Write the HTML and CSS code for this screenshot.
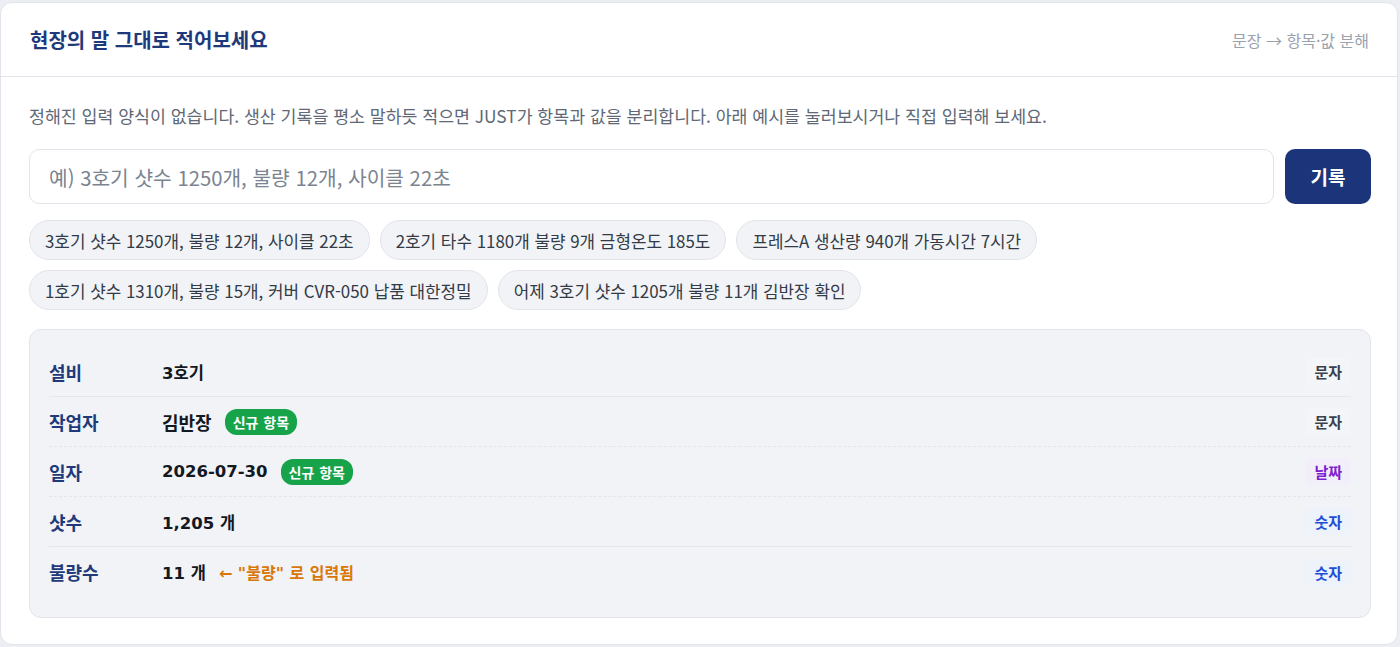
FILE: index.html
```html
<!DOCTYPE html>
<html lang="ko">
<head>
    <meta charset="UTF-8">
    <meta name="viewport" content="width=device-width, initial-scale=1.0">
    <title>현장의 말 그대로 적어보세요</title>
    <link rel="stylesheet" href="styles.css">
</head>
<body>
    <div class="card">
        <div class="card-header">
            <h2 class="title">현장의 말 그대로 적어보세요</h2>
            <span class="hint">문장 → 항목·값 분해</span>
        </div>

        <div class="card-body">
            <p class="desc">정해진 입력 양식이 없습니다. 생산 기록을 평소 말하듯 적으면 JUST가 항목과 값을 분리합니다. 아래 예시를 눌러보시거나 직접 입력해 보세요.</p>

            <div class="input-row">
                <input type="text" class="entry" placeholder="예) 3호기 샷수 1250개, 불량 12개, 사이클 22초">
                <button class="submit">기록</button>
            </div>

            <div class="chips">
                <button class="chip">3호기 샷수 1250개, 불량 12개, 사이클 22초</button>
                <button class="chip">2호기 타수 1180개 불량 9개 금형온도 185도</button>
                <button class="chip">프레스A 생산량 940개 가동시간 7시간</button>
                <button class="chip">1호기 샷수 1310개, 불량 15개, 커버 CVR-050 납품 대한정밀</button>
                <button class="chip">어제 3호기 샷수 1205개 불량 11개 김반장 확인</button>
            </div>

            <div class="result">
                <div class="row">
                    <span class="label">설비</span>
                    <span class="value">3호기</span>
                    <span class="type type-text">문자</span>
                </div>
                <div class="row new">
                    <span class="label">작업자</span>
                    <span class="value"><span class="ko">김반장</span> <span class="badge">신규 항목</span></span>
                    <span class="type type-text">문자</span>
                </div>
                <div class="row new">
                    <span class="label">일자</span>
                    <span class="value">2026-07-30 <span class="badge">신규 항목</span></span>
                    <span class="type type-date">날짜</span>
                </div>
                <div class="row">
                    <span class="label">샷수</span>
                    <span class="value">1,205 개</span>
                    <span class="type type-num">숫자</span>
                </div>
                <div class="row">
                    <span class="label">불량수</span>
                    <span class="value">11 개 <span class="alias">← "불량" 로 입력됨</span></span>
                    <span class="type type-num">숫자</span>
                </div>
            </div>
        </div>
    </div>
</body>
</html>
```

FILE: styles.css
```css
body {
    margin: 0;
    padding: 2px 2px 2px 0;
    background-color: #eceef3;
    font-family: "Noto Sans CJK KR", "Noto Sans", sans-serif;
}

.card {
    background-color: #fff;
    border: 1px solid #e1e4ea;
    border-radius: 12px;
}

.card-header {
    display: flex;
    align-items: center;
    justify-content: space-between;
    height: 73px;
    padding: 0 28px 0 29px;
    border-bottom: 1px solid #e1e4ea;
}

.title {
    margin: 0;
    font-size: 20px;
    font-weight: 700;
    color: #1e3a7b;
}

.hint {
    font-size: 16px;
    color: #9aa2ae;
}

.card-body {
    padding: 27px 26px 26px 28px;
}

.desc {
    margin: 0 0 21px;
    font-size: 17.3px;
    line-height: 24px;
    color: #5e6876;
}

.input-row {
    display: flex;
    gap: 11px;
}

.entry {
    flex: 1;
    height: 55px;
    box-sizing: border-box;
    padding: 0 19px;
    border: 1px solid #e1e4ea;
    border-radius: 10px;
    font-family: inherit;
    font-size: 20.3px;
    color: #222;
    outline: none;
}

.entry::placeholder {
    color: #7b8490;
}

.submit {
    width: 86px;
    height: 55px;
    border: none;
    border-radius: 10px;
    background-color: #1c357a;
    color: #fff;
    font-family: inherit;
    font-size: 19px;
    font-weight: 700;
    cursor: pointer;
}

.chips {
    display: flex;
    flex-wrap: wrap;
    gap: 10px;
    margin-top: 16px;
}

.chip {
    height: 40px;
    padding: 0 15px;
    border: 1px solid #e1e4ea;
    border-radius: 20px;
    background-color: #f1f3f6;
    color: #333b47;
    font-family: inherit;
    font-size: 16.9px;
    cursor: pointer;
}

.result {
    margin-top: 19px;
    padding: 17px 19px 20px;
    background-color: #f1f3f7;
    border: 1px solid #e1e4ea;
    border-radius: 12px;
    font-family: "DejaVu Sans", "Noto Sans CJK KR", sans-serif;
}

.row {
    display: flex;
    align-items: center;
    height: 49px;
    border-bottom: 1px solid #e3e6eb;
}

.row.new {
    border-bottom-style: dashed;
}

.row:last-child {
    height: 50px;
    border-bottom: none;
}

.label {
    width: 113px;
    font-family: "Noto Sans CJK KR", sans-serif;
    font-size: 18px;
    font-weight: 700;
    color: #1e3a7b;
}

.value {
    flex: 1;
    display: flex;
    align-items: center;
    gap: 13px;
    font-size: 16.5px;
    font-weight: 700;
    color: #14181f;
}

.value .ko {
    font-size: 18px;
}

.badge {
    padding: 3px 8px;
    border-radius: 12px;
    background-color: #16a34a;
    color: #fff;
    font-size: 14px;
    font-weight: 700;
}

.alias {
    font-size: 16px;
    font-weight: 700;
    color: #d97706;
}

.type {
    padding: 3px 9px;
    border-radius: 6px;
    font-size: 15px;
    font-weight: 700;
}

.type-text {
    color: #3a414c;
    background-color: #f4f5f8;
}

.type-date {
    color: #7e22ce;
    background-color: #f3effa;
}

.type-num {
    color: #1d4ed8;
    background-color: #edf2fb;
}
```
